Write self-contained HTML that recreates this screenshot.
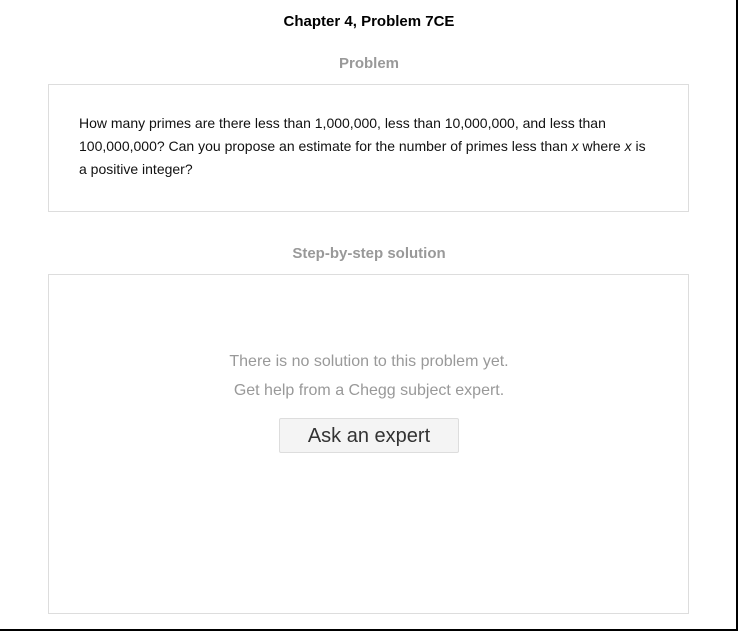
<!DOCTYPE html>
<html><head><style>
body{margin:0;width:738px;height:631px;background:#fff;font-family:"Liberation Sans",Arial,sans-serif;position:relative;overflow:hidden}
.frame{position:absolute;left:0;top:0;width:736px;height:629px;border-right:2px solid #000;border-bottom:2px solid #000}
.t{position:absolute;left:0;width:738px;text-align:center;font-weight:bold;font-size:15px}
.box{position:absolute;left:48px;width:639px;border:1px solid #ddd}
.p{position:absolute;left:79px;top:112px;width:570px;font-size:14px;line-height:23px;color:#111}
.g{position:absolute;left:0;width:738px;text-align:center;font-size:16px;color:#999}
.btn{position:absolute;left:279px;top:418px;width:178px;height:33px;border:1px solid #ddd;border-radius:2px;background:#f4f4f4;text-align:center;line-height:35px;font-size:20px;color:#333}
</style></head><body>
<div class="frame"></div>
<div class="t" style="top:13px;color:#000">Chapter 4, Problem 7CE</div>
<div class="t" style="top:55px;color:#999">Problem</div>
<div class="box" style="top:84px;height:126px"></div>
<div class="p">How many primes are there less than 1,000,000, less than 10,000,000, and less than 100,000,000? Can you propose an estimate for the number of primes less than <i>x</i> where <i>x</i> is a positive integer?</div>
<div class="t" style="top:245px;color:#999">Step-by-step solution</div>
<div class="box" style="top:274px;height:338px"></div>
<div class="g" style="top:353px">There is no solution to this problem yet.</div>
<div class="g" style="top:382px">Get help from a Chegg subject expert.</div>
<div class="btn">Ask an expert</div>
</body></html>
